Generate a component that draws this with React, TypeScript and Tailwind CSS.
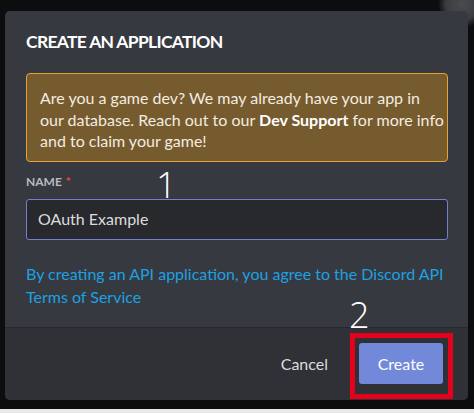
import React from 'react';

const font = { fontFamily: 'Lato, "Noto Sans", sans-serif' };
const markFont = { fontFamily: '"Open Sans", "Noto Sans", sans-serif' };

export default function App() {
  return (
    <div
      className="relative h-[413px] w-[474px] overflow-hidden bg-[#0c0d0f] bg-[radial-gradient(circle_at_462px_4px,#4a4b4e_0,#3c3d40_16px,transparent_24px)]"
      style={font}
    >
      <div className="flex h-[409px] flex-col pt-[11px] pl-[5px]">
        <div className="flex w-[463px] flex-col overflow-hidden rounded-[5px] bg-[#36393f]">
          {/* body */}
          <div className="flex flex-col pl-[21px] pr-[20px] pt-[19px]">
            <h2 className="text-[17.5px] font-bold uppercase leading-[24px] tracking-[-0.7px] text-white">
              Create an Application
            </h2>

            <div className="mt-[19px] whitespace-nowrap rounded-[4px] border border-[#e8a234] bg-[#765b2e] px-[13px] pt-[13px] pb-[9px] text-[16px] leading-[21.5px] text-[#f3ece0]">
              Are you a game dev? We may already have your app in
              <br />
              our database. Reach out to our <span className="font-bold text-white">Dev Support</span>{' '}
              for more info
              <br />
              and to claim your game!
            </div>

            <div className="mt-[12px] flex items-center gap-[4px] text-[12px] font-bold uppercase leading-[16px] text-[#b9bbbe]">
              <span>Name</span>
              <span className="text-[#f04747]">*</span>
            </div>

            <div className="mt-[9px] flex h-[41px] items-center rounded-[3px] border border-[#767ed0] bg-[#27292d] px-[11px] text-[16px] text-[#dcddde]">
              OAuth Example
            </div>

            <p className="mt-[22px] whitespace-nowrap text-[16px] leading-[23px] text-[#1da1e2]">
              By creating an API application, you agree to the Discord API
              <br />
              Terms of Service
            </p>
          </div>

          {/* footer */}
          <div className="mt-[19px] flex h-[73px] items-center justify-end gap-[31px] border-t border-[#28292e] bg-[#2f3136] pr-[25px]">
            <button className="text-[16px] text-[#dcddde]">Cancel</button>
            <button className="h-[41px] w-[84px] rounded-[3px] bg-[#7289da] text-[16px] text-white">
              Create
            </button>
          </div>
        </div>
      </div>
      <div className="h-[4px] bg-[#e9e9e9]" />

      {/* annotations */}
      <span
        className="absolute left-[156px] top-[167px] text-[36px] font-light leading-[36px] text-white"
        style={markFont}
      >
        1
      </span>
      <span
        className="absolute left-[349px] top-[297px] text-[36px] font-light leading-[36px] text-white"
        style={markFont}
      >
        2
      </span>
      <div className="absolute left-[350px] top-[333px] h-[66px] w-[103px] border-[5px] border-[#e5001c]" />
    </div>
  );
}
